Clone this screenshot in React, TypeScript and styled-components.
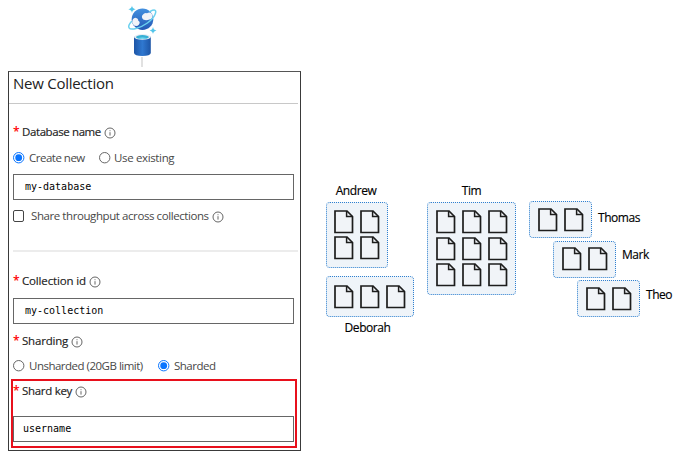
import React from 'react';
import styled, { createGlobalStyle } from 'styled-components';

const Global = createGlobalStyle`
  *, *::before, *::after { box-sizing: border-box; }
  body { margin: 0; background: #fff; font-family: "Open Sans", "Noto Sans", sans-serif; }
`;

const Page = styled.main`
  display: flex;
  width: 681px;
  height: 459px;
  overflow: hidden;
`;

const FormColumn = styled.section`
  width: 301px;
  padding-left: 8px;
  display: flex;
  flex-direction: column;
`;

const Logo = styled.svg`
  display: block;
  width: 40px;
  height: 71px;
  margin-left: 114px;
  flex: none;
`;

const Panel = styled.div`
  width: 293px;
  height: 380px;
  border: 1px solid #3a3a3a;
  border-top-color: #555;
  display: flex;
  flex-direction: column;
`;

const Header = styled.h1`
  margin: 0 2px 0 0;
  padding-left: 4px;
  height: 32px;
  flex: none;
  border-bottom: 1px solid #c8c8c8;
  font-size: 15px;
  font-weight: 400;
  line-height: 23px;
  letter-spacing: -0.26px;
  color: #222;
`;

const Row = styled.div<{ $top: number; $inset?: number }>`
  display: flex;
  align-items: center;
  flex: none;
  height: 16px;
  margin-top: ${p => p.$top}px;
  padding-left: ${p => p.$inset ?? 4}px;
`;

const Star = styled.span`
  width: 9px;
  font-size: 12px;
  font-weight: 600;
  line-height: 16px;
  color: #f00;
`;

const Label = styled.span<{ $w: number; $ls?: number }>`
  width: ${p => p.$w}px;
  font-size: 11.5px;
  line-height: 16px;
  letter-spacing: ${p => p.$ls ?? 0}px;
  white-space: nowrap;
  color: #222;
  -webkit-text-stroke: 0.15px #222;
`;

const OptionText = styled.span<{ $w: number; $ls?: number; $gap?: number }>`
  width: ${p => p.$w}px;
  margin-left: ${p => p.$gap ?? 4}px;
  font-size: 11.5px;
  line-height: 16px;
  letter-spacing: ${p => p.$ls ?? 0}px;
  white-space: nowrap;
  color: #484848;
`;

const Glyph = styled.svg`
  display: block;
  width: 12px;
  height: 12px;
  flex: none;
`;

const InfoGlyph = styled(Glyph)`
  margin-top: 2px;
`;

const CheckBox = styled.span`
  width: 11px;
  height: 12px;
  margin-right: 3px;
  flex: none;
  border: 1px solid #444;
  border-radius: 2px;
`;

const Input = styled.div<{ $top: number; $left?: number; $pad?: number }>`
  flex: none;
  width: 281px;
  height: 26px;
  margin-top: ${p => p.$top}px;
  margin-left: ${p => p.$left ?? 4}px;
  padding-left: ${p => p.$pad ?? 11}px;
  border: 1px solid #666;
  font-family: "DejaVu Sans Mono", monospace;
  font-size: 10px;
  line-height: 23px;
  color: #000;
`;

const Divider = styled.div`
  flex: none;
  height: 2px;
  margin: 26px 2px 0 4px;
  background: #ececec;
`;

const Highlight = styled.div`
  flex: none;
  width: 286px;
  height: 69px;
  margin: 5px 0 0 2px;
  border: 2px solid #e8101c;
`;

const Diagram = styled.section`
  display: flex;
  align-items: flex-start;
  padding: 182px 0 0 25px;
`;

const Column = styled.div<{ $w: number; $top?: number }>`
  flex: none;
  width: ${p => p.$w}px;
  padding-top: ${p => p.$top ?? 0}px;
`;

const Name = styled.div<{ $w: number; $top?: number }>`
  width: ${p => p.$w}px;
  height: 20px;
  margin-top: ${p => p.$top ?? 0}px;
  font-size: 12px;
  line-height: 17px;
  letter-spacing: -0.45px;
  text-align: center;
  color: #000;
  -webkit-text-stroke: 0.15px #000;
`;

const Shard = styled.div<{ $cols: number; $w: number; $h: number; $top?: number }>`
  display: grid;
  grid-template-columns: repeat(${p => p.$cols}, 20px);
  grid-auto-rows: 24px;
  gap: 2.5px 6px;
  flex: none;
  width: ${p => p.$w}px;
  height: ${p => p.$h}px;
  margin-top: ${p => p.$top ?? 0}px;
  align-content: center;
  justify-content: center;
  border: 1px dotted #2f80d0;
  border-radius: 4px;
  background: #eff4f9;
`;

const Step = styled.div<{ $left: number }>`
  display: flex;
  align-items: center;
  height: 37px;
  margin: 0 0 2.5px ${p => p.$left}px;
`;

const SideName = styled.span<{ $lift: number }>`
  margin: -${p => p.$lift}px 0 0 6px;
  font-size: 12px;
  line-height: 16px;
  letter-spacing: -0.45px;
  color: #000;
  -webkit-text-stroke: 0.15px #000;
`;

const DocSvg = styled.svg`
  display: block;
  width: 20px;
  height: 24px;
`;

const Info = () => (
  <InfoGlyph viewBox="0 0 12 12">
    <circle cx="6" cy="6" r="5" fill="none" stroke="#555" strokeWidth="0.9" />
    <path d="M6 5.2V8.6M6 3.3V4.2" stroke="#555" strokeWidth="0.9" />
  </InfoGlyph>
);

const Radio = ({ on = false }: { on?: boolean }) => (
  <Glyph viewBox="0 0 12 12">
    <circle cx="5.7" cy="5.7" r="5.2" fill="#fff" stroke={on ? '#0a75ff' : '#666'} strokeWidth="1" />
    {on && <circle cx="5.7" cy="5.7" r="3.4" fill="#0a75ff" />}
  </Glyph>
);

const Doc = () => (
  <DocSvg viewBox="0 0 20 24">
    <path d="M1 1H13L18.5 6.5V22.5H1Z" fill="#f1f4f8" stroke="#1d1d1d" strokeWidth="1.7" />
    <path d="M12.6 1V6.4H18.5" fill="none" stroke="#1d1d1d" strokeWidth="1.5" />
  </DocSvg>
);

const Docs = ({ n }: { n: number }) => <>{Array.from({ length: n }, (_, i) => <Doc key={i} />)}</>;

const CosmosLogo = () => (
  <Logo viewBox="122 0 40 71">
    <defs>
      <linearGradient id="planet" x1="0" y1="0" x2="0" y2="1">
        <stop offset="0" stopColor="#4390df" />
        <stop offset="1" stopColor="#2459b5" />
      </linearGradient>
      <linearGradient id="can" x1="0" y1="0" x2="1" y2="0">
        <stop offset="0" stopColor="#1d55a6" />
        <stop offset="0.5" stopColor="#2f78d0" />
        <stop offset="1" stopColor="#1d55a6" />
      </linearGradient>
    </defs>
    <circle cx="142.5" cy="19.2" r="10.8" fill="url(#planet)" />
    <path d="M132.2 22.5Q132 18.5 135.5 17.8Q138.4 18.3 138.3 20.8Q140.8 22 138.8 24.7Q137.2 26.8 133.8 25.5Z" fill="#f1f3f8" />
    <path d="M143.2 19.5Q140.8 17 142.8 14.8Q144.5 12.2 147 13.2Q149.8 11.5 151.5 13.5Q153.8 17 151 19Q147 21 143.2 19.5Z" fill="#f1f3f8" />
    <path d="M150 11.5C155 9 157 9.8 155 14.5C152.5 20.5 143.5 26.5 136 28.5C128.5 30.5 126.5 27 131.5 21.5" fill="none" stroke="#6bd1ef" strokeWidth="1.5" strokeLinecap="round" />
    <path d="M132 5.5Q132.3 8.7 135.7 9.2Q132.3 9.8 132 13Q131.6 9.8 128.3 9.2Q131.6 8.7 132 5.5Z" fill="#53c5ea" />
    <path d="M153 27Q153.4 30 156.5 30.5Q153.4 31 153 34Q152.6 31 149.5 30.5Q152.6 30 153 27Z" fill="#53c5ea" />
    <path d="M134 36.8V53Q134.5 55.9 142.4 55.9Q150.3 55.9 150.8 53V36.8Z" fill="url(#can)" />
    <ellipse cx="142.4" cy="36.9" rx="8.4" ry="2.8" fill="#e9eef4" />
    <ellipse cx="142.4" cy="37.1" rx="6.5" ry="2" fill="#38b0d5" />
    <path d="M137.5 38.3Q142.4 36.5 147.3 38.3Q142.4 39.8 137.5 38.3Z" fill="#7bdcf3" />
    <path d="M142 57V67" stroke="#dedede" strokeWidth="1.8" />
  </Logo>
);

export default function App() {
  return (
    <>
      <Global />
      <Page>
        <FormColumn>
          <CosmosLogo />
          <Panel>
            <Header>New Collection</Header>
            <Row $top={20}><Star>*</Star><Label $w={82} $ls={-0.4}>Database name</Label><Info /></Row>
            <Row $top={10}>
              <Radio on /><OptionText $w={70} $ls={-0.5}>Create new</OptionText>
              <Radio /><OptionText $w={70} $ls={-0.35} $gap={3}>Use existing</OptionText>
            </Row>
            <Input $top={8}>my-database</Input>
            <Row $top={8}><CheckBox /><OptionText $w={181} $ls={-0.42}>Share throughput across collections</OptionText><Info /></Row>
            <Divider />
            <Row $top={21}><Star>*</Star><Label $w={67} $ls={-0.15}>Collection id</Label><Info /></Row>
            <Input $top={9}>my-collection</Input>
            <Row $top={9}><Star>*</Star><Label $w={49} $ls={-0.2}>Sharding</Label><Info /></Row>
            <Row $top={9}>
              <Radio /><OptionText $w={129} $ls={-0.5}>Unsharded (20GB limit)</OptionText>
              <Radio on /><OptionText $w={60} $ls={-0.5}>Sharded</OptionText>
            </Row>
            <Highlight>
              <Row $top={2} $inset={0}><Star>*</Star><Label $w={53} $ls={-0.3}>Shard key</Label><Info /></Row>
              <Input $top={17} $left={0} $pad={9}>username</Input>
            </Highlight>
          </Panel>
        </FormColumn>
        <Diagram>
          <Column $w={101}>
            <Name $w={60}>Andrew</Name>
            <Shard $cols={2} $w={62} $h={66}><Docs n={4} /></Shard>
            <Shard $cols={3} $w={88} $h={41} $top={8}><Docs n={3} /></Shard>
            <Name $w={83} $top={2}>Deborah</Name>
          </Column>
          <Column $w={102}>
            <Name $w={89}>Tim</Name>
            <Shard $cols={3} $w={89} $h={93}><Docs n={9} /></Shard>
          </Column>
          <Column $w={152} $top={19}>
            <Step $left={0}><Shard $cols={2} $w={63} $h={37}><Docs n={2} /></Shard><SideName $lift={3}>Thomas</SideName></Step>
            <Step $left={24}><Shard $cols={2} $w={63} $h={37}><Docs n={2} /></Shard><SideName $lift={8}>Mark</SideName></Step>
            <Step $left={48}><Shard $cols={2} $w={63} $h={37}><Docs n={2} /></Shard><SideName $lift={7}>Theo</SideName></Step>
          </Column>
        </Diagram>
      </Page>
    </>
  );
}
